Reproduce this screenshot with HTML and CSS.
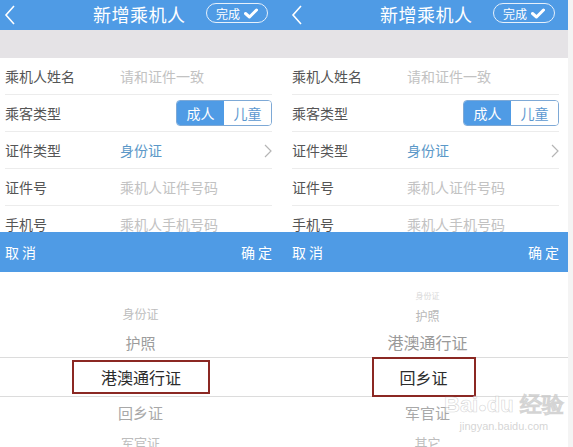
FILE: index.html
```html
<!DOCTYPE html>
<html>
<head>
<meta charset="utf-8">
<link rel="stylesheet" href="styles.css">
</head>
<body>
<div class="page">
  <div class="clip clip-left">
    <div class="panel">
      <div class="header">
        <svg class="back" width="12" height="20" viewBox="0 0 12 20"><path d="M10 1 L2 10 L10 19" fill="none" stroke="#fff" stroke-width="1.6"/></svg>
        <div class="title">新增乘机人</div>
        <div class="done">完成<svg width="14" height="11" viewBox="0 0 14 11"><path d="M1.5 5.5 L5.5 9 L12.5 2" fill="none" stroke="#fff" stroke-width="3" stroke-linecap="round" stroke-linejoin="round"/></svg></div>
      </div>
      <div class="band"></div>
      <div class="form">
        <div class="row"><span class="label">乘机人姓名</span><span class="ph">请和证件一致</span></div>
        <div class="row"><span class="label">乘客类型</span><span class="seg"><span class="seg-on">成人</span><span class="seg-off">儿童</span></span></div>
        <div class="row"><span class="label">证件类型</span><span class="val">身份证</span><svg class="chev" width="8" height="14" viewBox="0 0 8 14"><path d="M1 1 L7 7 L1 13" fill="none" stroke="#b5b5b5" stroke-width="1.2"/></svg></div>
        <div class="row"><span class="label">证件号</span><span class="ph">乘机人证件号码</span></div>
        <div class="row"><span class="label">手机号</span><span class="ph">乘机人手机号码</span></div>
      </div>
      <div class="bar"><span>取消</span><span>确定</span></div>
      <div class="wheel">
        <div class="pad-a"></div>
        <div class="it far">身份证</div>
        <div class="it near">护照</div>
        <div class="it sel"><span class="box box-a">港澳通行证</span></div>
        <div class="it near2">回乡证</div>
        <div class="it far2">军官证</div>
      </div>
    </div>
  </div>
  <div class="clip clip-right">
    <div class="panel">
      <div class="header">
        <svg class="back" width="12" height="20" viewBox="0 0 12 20"><path d="M10 1 L2 10 L10 19" fill="none" stroke="#fff" stroke-width="1.6"/></svg>
        <div class="title">新增乘机人</div>
        <div class="done">完成<svg width="14" height="11" viewBox="0 0 14 11"><path d="M1.5 5.5 L5.5 9 L12.5 2" fill="none" stroke="#fff" stroke-width="3" stroke-linecap="round" stroke-linejoin="round"/></svg></div>
      </div>
      <div class="band"></div>
      <div class="form">
        <div class="row"><span class="label">乘机人姓名</span><span class="ph">请和证件一致</span></div>
        <div class="row"><span class="label">乘客类型</span><span class="seg"><span class="seg-on">成人</span><span class="seg-off">儿童</span></span></div>
        <div class="row"><span class="label">证件类型</span><span class="val">身份证</span><svg class="chev" width="8" height="14" viewBox="0 0 8 14"><path d="M1 1 L7 7 L1 13" fill="none" stroke="#b5b5b5" stroke-width="1.2"/></svg></div>
        <div class="row"><span class="label">证件号</span><span class="ph">乘机人证件号码</span></div>
        <div class="row"><span class="label">手机号</span><span class="ph">乘机人手机号码</span></div>
      </div>
      <div class="bar"><span>取消</span><span>确定</span></div>
      <div class="wheel">
        <div class="pad-b"></div>
        <div class="it farthest">身份证</div>
        <div class="it far-b">护照</div>
        <div class="it near-b">港澳通行证</div>
        <div class="it sel"><span class="box box-b">回乡证</span></div>
        <div class="it near2">军官证</div>
        <div class="it far2">其它</div>
      </div>
      <div class="watermark"><span class="wm-big">Bai<span class="wm-paw">●</span>du 经验</span><span class="wm-small">jingyan.baidu.com</span></div>
    </div>
  </div>
  <div class="strip"></div>
</div>
</body>
</html>
```

FILE: styles.css
```css
* { box-sizing: border-box; }
html, body { margin: 0; padding: 0; background: #fff; }
body {
  font-family: "Noto Sans CJK SC", "Noto Sans", sans-serif;
  width: 573px;
  height: 447px;
  overflow: hidden;
}
.page { display: flex; width: 573px; height: 447px; }
.clip { overflow: hidden; height: 447px; flex-shrink: 0; }
.clip-left { width: 287px; }
.clip-right { width: 281px; }
.strip { width: 5px; background: #f4f4f4; }
.panel { width: 287px; height: 447px; position: relative; background: #fff; }

.header {
  height: 30px;
  background: #4f9be5;
  display: flex;
  align-items: center;
  position: relative;
  padding-left: 4px;
}
.back { display: block; }
.title {
  position: absolute;
  left: 93px;
  top: 3px;
  color: #fff;
  font-size: 18px;
  line-height: 22px;
  letter-spacing: 0.5px;
}
.done {
  position: absolute;
  left: 206px;
  top: 3px;
  width: 62px;
  height: 20px;
  border: 1.5px solid #e6f0fb;
  border-radius: 10px;
  color: #fff;
  font-size: 12px;
  line-height: 17px;
  display: flex;
  align-items: center;
  justify-content: center;
  gap: 4px;
}
.done svg { display: block; }

.band { height: 28px; background: #e5e3e6; }

.form { height: 174px; overflow: hidden; }
.row {
  height: 37px;
  margin: 0 15px 0 5px;
  border-bottom: 1px solid #ececec;
  display: flex;
  align-items: center;
  font-size: 14px;
  position: relative;
}
.label { width: 115px; color: #555; flex-shrink: 0; }
.ph { color: #c2c2c2; }
.val { color: #5b98c8; }
.chev { position: absolute; right: 0; top: 12px; }
.seg {
  margin-left: auto;
  display: flex;
  height: 26px;
  border: 1px solid #7ea9d6;
  border-radius: 4px;
  overflow: hidden;
}
.seg-on, .seg-off {
  width: 47px;
  display: flex;
  align-items: center;
  justify-content: center;
  font-size: 14px;
}
.seg-on { background: #4f9be5; color: #fff; }
.seg-off { background: #fff; color: #5b98d0; }

.bar {
  height: 40px;
  background: #4f9be5;
  display: flex;
  justify-content: space-between;
  align-items: center;
  padding: 0 12px 0 5px;
  color: #fff;
  font-size: 14px;
  letter-spacing: 3px;
}

.wheel { height: 175px; display: flex; flex-direction: column; overflow: hidden; }
.pad-a { height: 27px; flex-shrink: 0; }
.pad-b { height: 15px; flex-shrink: 0; }
.it {
  flex-shrink: 0;
  display: flex;
  align-items: center;
  justify-content: center;
  padding-right: 6px;
}
.far { height: 29px; font-size: 12px; color: #bdbdbd; }
.near { height: 29px; font-size: 15px; color: #9c9c9c; }
.sel {
  height: 40px;
  border-top: 1px solid #dcdcdc;
  border-bottom: 1px solid #dcdcdc;
  font-size: 16px;
  color: #2c2c2c;
}
.near2 { height: 30px; font-size: 15px; color: #a8a8a8; }
.far2 { height: 30px; font-size: 13px; color: #bdbdbd; }
.farthest { height: 17px; font-size: 8px; color: #d8d8d8; }
.far-b { height: 23px; font-size: 12px; color: #b8b8b8; }
.near-b { height: 30px; font-size: 16px; color: #9a9a9a; }

.box {
  display: flex;
  align-items: center;
  justify-content: center;
  border: 2px solid #8b2823;
}
.box-a { width: 138px; height: 34px; margin-left: 1px; }
.box-b { width: 104px; height: 40px; margin-left: -8px; }

.watermark {
  position: absolute;
  left: 157px;
  top: 393px;
  display: flex;
  flex-direction: column;
  align-items: center;
  color: rgba(255, 255, 255, 0.6);
  -webkit-text-stroke: 0.6px rgba(170, 170, 170, 0.5);
  pointer-events: none;
}
.wm-big { font-family: "Liberation Sans", sans-serif; font-size: 22px; line-height: 24px; font-weight: bold; }
.wm-paw { font-size: 14px; }
.wm-small { font-family: "Liberation Sans", sans-serif; font-size: 11px; line-height: 14px; -webkit-text-stroke: 0; color: rgba(170, 170, 170, 0.5); }
```
